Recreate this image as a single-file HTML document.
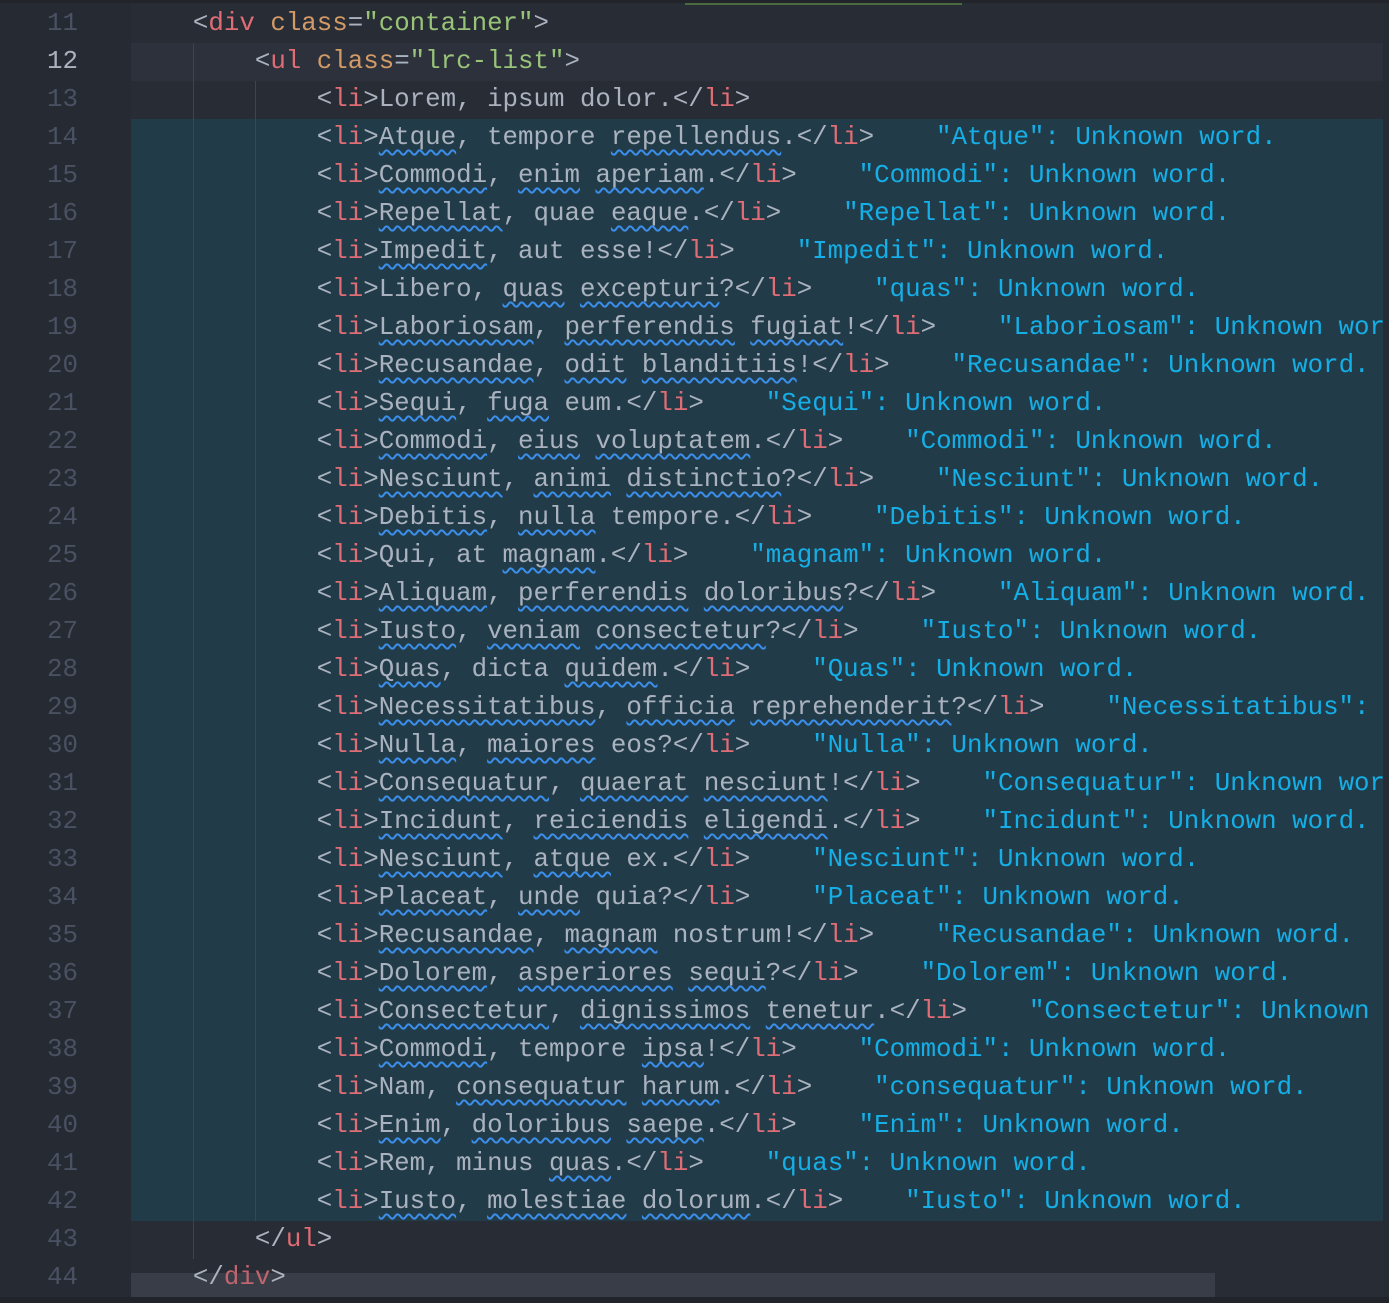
<!DOCTYPE html>
<html><head><meta charset="utf-8"><style>
html,body{margin:0;padding:0;}
body{width:1389px;height:1303px;background:#282c34;position:relative;overflow:hidden;font-family:"Liberation Mono",monospace;font-size:25.8px;}
#gut{position:absolute;left:0;top:0;width:131px;height:1303px;background:#262a32;}
#ed{position:absolute;left:131px;top:0;width:1252px;height:1297px;overflow:hidden;}
.r{position:absolute;left:0;height:38px;line-height:38px;white-space:pre;color:#abb2bf;width:1252px;}
.n{position:absolute;left:0;width:78px;text-align:right;height:38px;line-height:38px;color:#495162;}
.t{color:#e06c75}.a{color:#d19a66}.s{color:#98c379}
.u{text-decoration:underline wavy #3b8eea;text-decoration-thickness:1.5px;text-underline-offset:5px;}
.m{color:#16aee6}
.g{position:absolute;width:1px;background:#3e4450;}
</style></head><body>
<div id="gut"></div>
<div style="position:absolute;left:0;top:0;width:1389px;height:3px;background:#21252b"></div>
<div style="position:absolute;left:131px;top:43px;width:1252px;height:38px;background:#2c313c"></div>
<div style="position:absolute;left:131px;top:119px;width:1252px;height:1102px;background:#213c48"></div>
<div style="position:absolute;left:1383px;top:3px;width:6px;height:1294px;background:#262c33"></div>
<div style="position:absolute;left:685px;top:3px;width:277px;height:2px;background:#4a6b3f"></div>
<div style="position:absolute;left:131px;top:1273px;width:1084px;height:24px;background:#383d48"></div>
<div style="position:absolute;left:0;top:1297px;width:1389px;height:6px;background:#21252b"></div>
<div class="g" style="left:193px;top:43px;height:1216px"></div>
<div class="g" style="left:255px;top:81px;height:1140px"></div>
<div id="nums">
<div class="n" style="top:5px">11</div><div class="n" style="top:43px;color:#abb2bf">12</div><div class="n" style="top:81px">13</div><div class="n" style="top:119px">14</div><div class="n" style="top:157px">15</div><div class="n" style="top:195px">16</div><div class="n" style="top:233px">17</div><div class="n" style="top:271px">18</div><div class="n" style="top:309px">19</div><div class="n" style="top:347px">20</div><div class="n" style="top:385px">21</div><div class="n" style="top:423px">22</div><div class="n" style="top:461px">23</div><div class="n" style="top:499px">24</div><div class="n" style="top:537px">25</div><div class="n" style="top:575px">26</div><div class="n" style="top:613px">27</div><div class="n" style="top:651px">28</div><div class="n" style="top:689px">29</div><div class="n" style="top:727px">30</div><div class="n" style="top:765px">31</div><div class="n" style="top:803px">32</div><div class="n" style="top:841px">33</div><div class="n" style="top:879px">34</div><div class="n" style="top:917px">35</div><div class="n" style="top:955px">36</div><div class="n" style="top:993px">37</div><div class="n" style="top:1031px">38</div><div class="n" style="top:1069px">39</div><div class="n" style="top:1107px">40</div><div class="n" style="top:1145px">41</div><div class="n" style="top:1183px">42</div><div class="n" style="top:1221px">43</div><div class="n" style="top:1259px">44</div>
</div>
<div id="ed">
<div class="r" style="top:5px">    &lt;<span class="t">div</span> <span class="a">class</span>=<span class="s">"container"</span>&gt;</div>
<div class="r" style="top:43px">        &lt;<span class="t">ul</span> <span class="a">class</span>=<span class="s">"lrc-list"</span>&gt;</div>
<div class="r" style="top:81px">            &lt;<span class="t">li</span>&gt;Lorem, ipsum dolor.&lt;/<span class="t">li</span>&gt;</div>
<div class="r" style="top:119px">            &lt;<span class="t">li</span>&gt;<span class="u">Atque</span>, tempore <span class="u">repellendus</span>.&lt;/<span class="t">li</span>&gt;    <span class="m">"Atque": Unknown word.</span></div>
<div class="r" style="top:157px">            &lt;<span class="t">li</span>&gt;<span class="u">Commodi</span>, <span class="u">enim</span> <span class="u">aperiam</span>.&lt;/<span class="t">li</span>&gt;    <span class="m">"Commodi": Unknown word.</span></div>
<div class="r" style="top:195px">            &lt;<span class="t">li</span>&gt;<span class="u">Repellat</span>, quae <span class="u">eaque</span>.&lt;/<span class="t">li</span>&gt;    <span class="m">"Repellat": Unknown word.</span></div>
<div class="r" style="top:233px">            &lt;<span class="t">li</span>&gt;<span class="u">Impedit</span>, aut esse!&lt;/<span class="t">li</span>&gt;    <span class="m">"Impedit": Unknown word.</span></div>
<div class="r" style="top:271px">            &lt;<span class="t">li</span>&gt;Libero, <span class="u">quas</span> <span class="u">excepturi</span>?&lt;/<span class="t">li</span>&gt;    <span class="m">"quas": Unknown word.</span></div>
<div class="r" style="top:309px">            &lt;<span class="t">li</span>&gt;<span class="u">Laboriosam</span>, <span class="u">perferendis</span> <span class="u">fugiat</span>!&lt;/<span class="t">li</span>&gt;    <span class="m">"Laboriosam": Unknown word.</span></div>
<div class="r" style="top:347px">            &lt;<span class="t">li</span>&gt;<span class="u">Recusandae</span>, <span class="u">odit</span> <span class="u">blanditiis</span>!&lt;/<span class="t">li</span>&gt;    <span class="m">"Recusandae": Unknown word.</span></div>
<div class="r" style="top:385px">            &lt;<span class="t">li</span>&gt;<span class="u">Sequi</span>, <span class="u">fuga</span> eum.&lt;/<span class="t">li</span>&gt;    <span class="m">"Sequi": Unknown word.</span></div>
<div class="r" style="top:423px">            &lt;<span class="t">li</span>&gt;<span class="u">Commodi</span>, <span class="u">eius</span> <span class="u">voluptatem</span>.&lt;/<span class="t">li</span>&gt;    <span class="m">"Commodi": Unknown word.</span></div>
<div class="r" style="top:461px">            &lt;<span class="t">li</span>&gt;<span class="u">Nesciunt</span>, <span class="u">animi</span> <span class="u">distinctio</span>?&lt;/<span class="t">li</span>&gt;    <span class="m">"Nesciunt": Unknown word.</span></div>
<div class="r" style="top:499px">            &lt;<span class="t">li</span>&gt;<span class="u">Debitis</span>, <span class="u">nulla</span> tempore.&lt;/<span class="t">li</span>&gt;    <span class="m">"Debitis": Unknown word.</span></div>
<div class="r" style="top:537px">            &lt;<span class="t">li</span>&gt;Qui, at <span class="u">magnam</span>.&lt;/<span class="t">li</span>&gt;    <span class="m">"magnam": Unknown word.</span></div>
<div class="r" style="top:575px">            &lt;<span class="t">li</span>&gt;<span class="u">Aliquam</span>, <span class="u">perferendis</span> <span class="u">doloribus</span>?&lt;/<span class="t">li</span>&gt;    <span class="m">"Aliquam": Unknown word.</span></div>
<div class="r" style="top:613px">            &lt;<span class="t">li</span>&gt;<span class="u">Iusto</span>, <span class="u">veniam</span> <span class="u">consectetur</span>?&lt;/<span class="t">li</span>&gt;    <span class="m">"Iusto": Unknown word.</span></div>
<div class="r" style="top:651px">            &lt;<span class="t">li</span>&gt;<span class="u">Quas</span>, dicta <span class="u">quidem</span>.&lt;/<span class="t">li</span>&gt;    <span class="m">"Quas": Unknown word.</span></div>
<div class="r" style="top:689px">            &lt;<span class="t">li</span>&gt;<span class="u">Necessitatibus</span>, <span class="u">officia</span> <span class="u">reprehenderit</span>?&lt;/<span class="t">li</span>&gt;    <span class="m">"Necessitatibus": Unknown word.</span></div>
<div class="r" style="top:727px">            &lt;<span class="t">li</span>&gt;<span class="u">Nulla</span>, <span class="u">maiores</span> eos?&lt;/<span class="t">li</span>&gt;    <span class="m">"Nulla": Unknown word.</span></div>
<div class="r" style="top:765px">            &lt;<span class="t">li</span>&gt;<span class="u">Consequatur</span>, <span class="u">quaerat</span> <span class="u">nesciunt</span>!&lt;/<span class="t">li</span>&gt;    <span class="m">"Consequatur": Unknown word.</span></div>
<div class="r" style="top:803px">            &lt;<span class="t">li</span>&gt;<span class="u">Incidunt</span>, <span class="u">reiciendis</span> <span class="u">eligendi</span>.&lt;/<span class="t">li</span>&gt;    <span class="m">"Incidunt": Unknown word.</span></div>
<div class="r" style="top:841px">            &lt;<span class="t">li</span>&gt;<span class="u">Nesciunt</span>, <span class="u">atque</span> ex.&lt;/<span class="t">li</span>&gt;    <span class="m">"Nesciunt": Unknown word.</span></div>
<div class="r" style="top:879px">            &lt;<span class="t">li</span>&gt;<span class="u">Placeat</span>, <span class="u">unde</span> quia?&lt;/<span class="t">li</span>&gt;    <span class="m">"Placeat": Unknown word.</span></div>
<div class="r" style="top:917px">            &lt;<span class="t">li</span>&gt;<span class="u">Recusandae</span>, <span class="u">magnam</span> nostrum!&lt;/<span class="t">li</span>&gt;    <span class="m">"Recusandae": Unknown word.</span></div>
<div class="r" style="top:955px">            &lt;<span class="t">li</span>&gt;<span class="u">Dolorem</span>, <span class="u">asperiores</span> <span class="u">sequi</span>?&lt;/<span class="t">li</span>&gt;    <span class="m">"Dolorem": Unknown word.</span></div>
<div class="r" style="top:993px">            &lt;<span class="t">li</span>&gt;<span class="u">Consectetur</span>, <span class="u">dignissimos</span> <span class="u">tenetur</span>.&lt;/<span class="t">li</span>&gt;    <span class="m">"Consectetur": Unknown word.</span></div>
<div class="r" style="top:1031px">            &lt;<span class="t">li</span>&gt;<span class="u">Commodi</span>, tempore <span class="u">ipsa</span>!&lt;/<span class="t">li</span>&gt;    <span class="m">"Commodi": Unknown word.</span></div>
<div class="r" style="top:1069px">            &lt;<span class="t">li</span>&gt;Nam, <span class="u">consequatur</span> <span class="u">harum</span>.&lt;/<span class="t">li</span>&gt;    <span class="m">"consequatur": Unknown word.</span></div>
<div class="r" style="top:1107px">            &lt;<span class="t">li</span>&gt;<span class="u">Enim</span>, <span class="u">doloribus</span> <span class="u">saepe</span>.&lt;/<span class="t">li</span>&gt;    <span class="m">"Enim": Unknown word.</span></div>
<div class="r" style="top:1145px">            &lt;<span class="t">li</span>&gt;Rem, minus <span class="u">quas</span>.&lt;/<span class="t">li</span>&gt;    <span class="m">"quas": Unknown word.</span></div>
<div class="r" style="top:1183px">            &lt;<span class="t">li</span>&gt;<span class="u">Iusto</span>, <span class="u">molestiae</span> <span class="u">dolorum</span>.&lt;/<span class="t">li</span>&gt;    <span class="m">"Iusto": Unknown word.</span></div>
<div class="r" style="top:1221px">        &lt;/<span class="t">ul</span>&gt;</div>
<div class="r" style="top:1259px">    &lt;/<span class="t" style="color:#c0646e">div</span>&gt;</div>
</div>
</body></html>
